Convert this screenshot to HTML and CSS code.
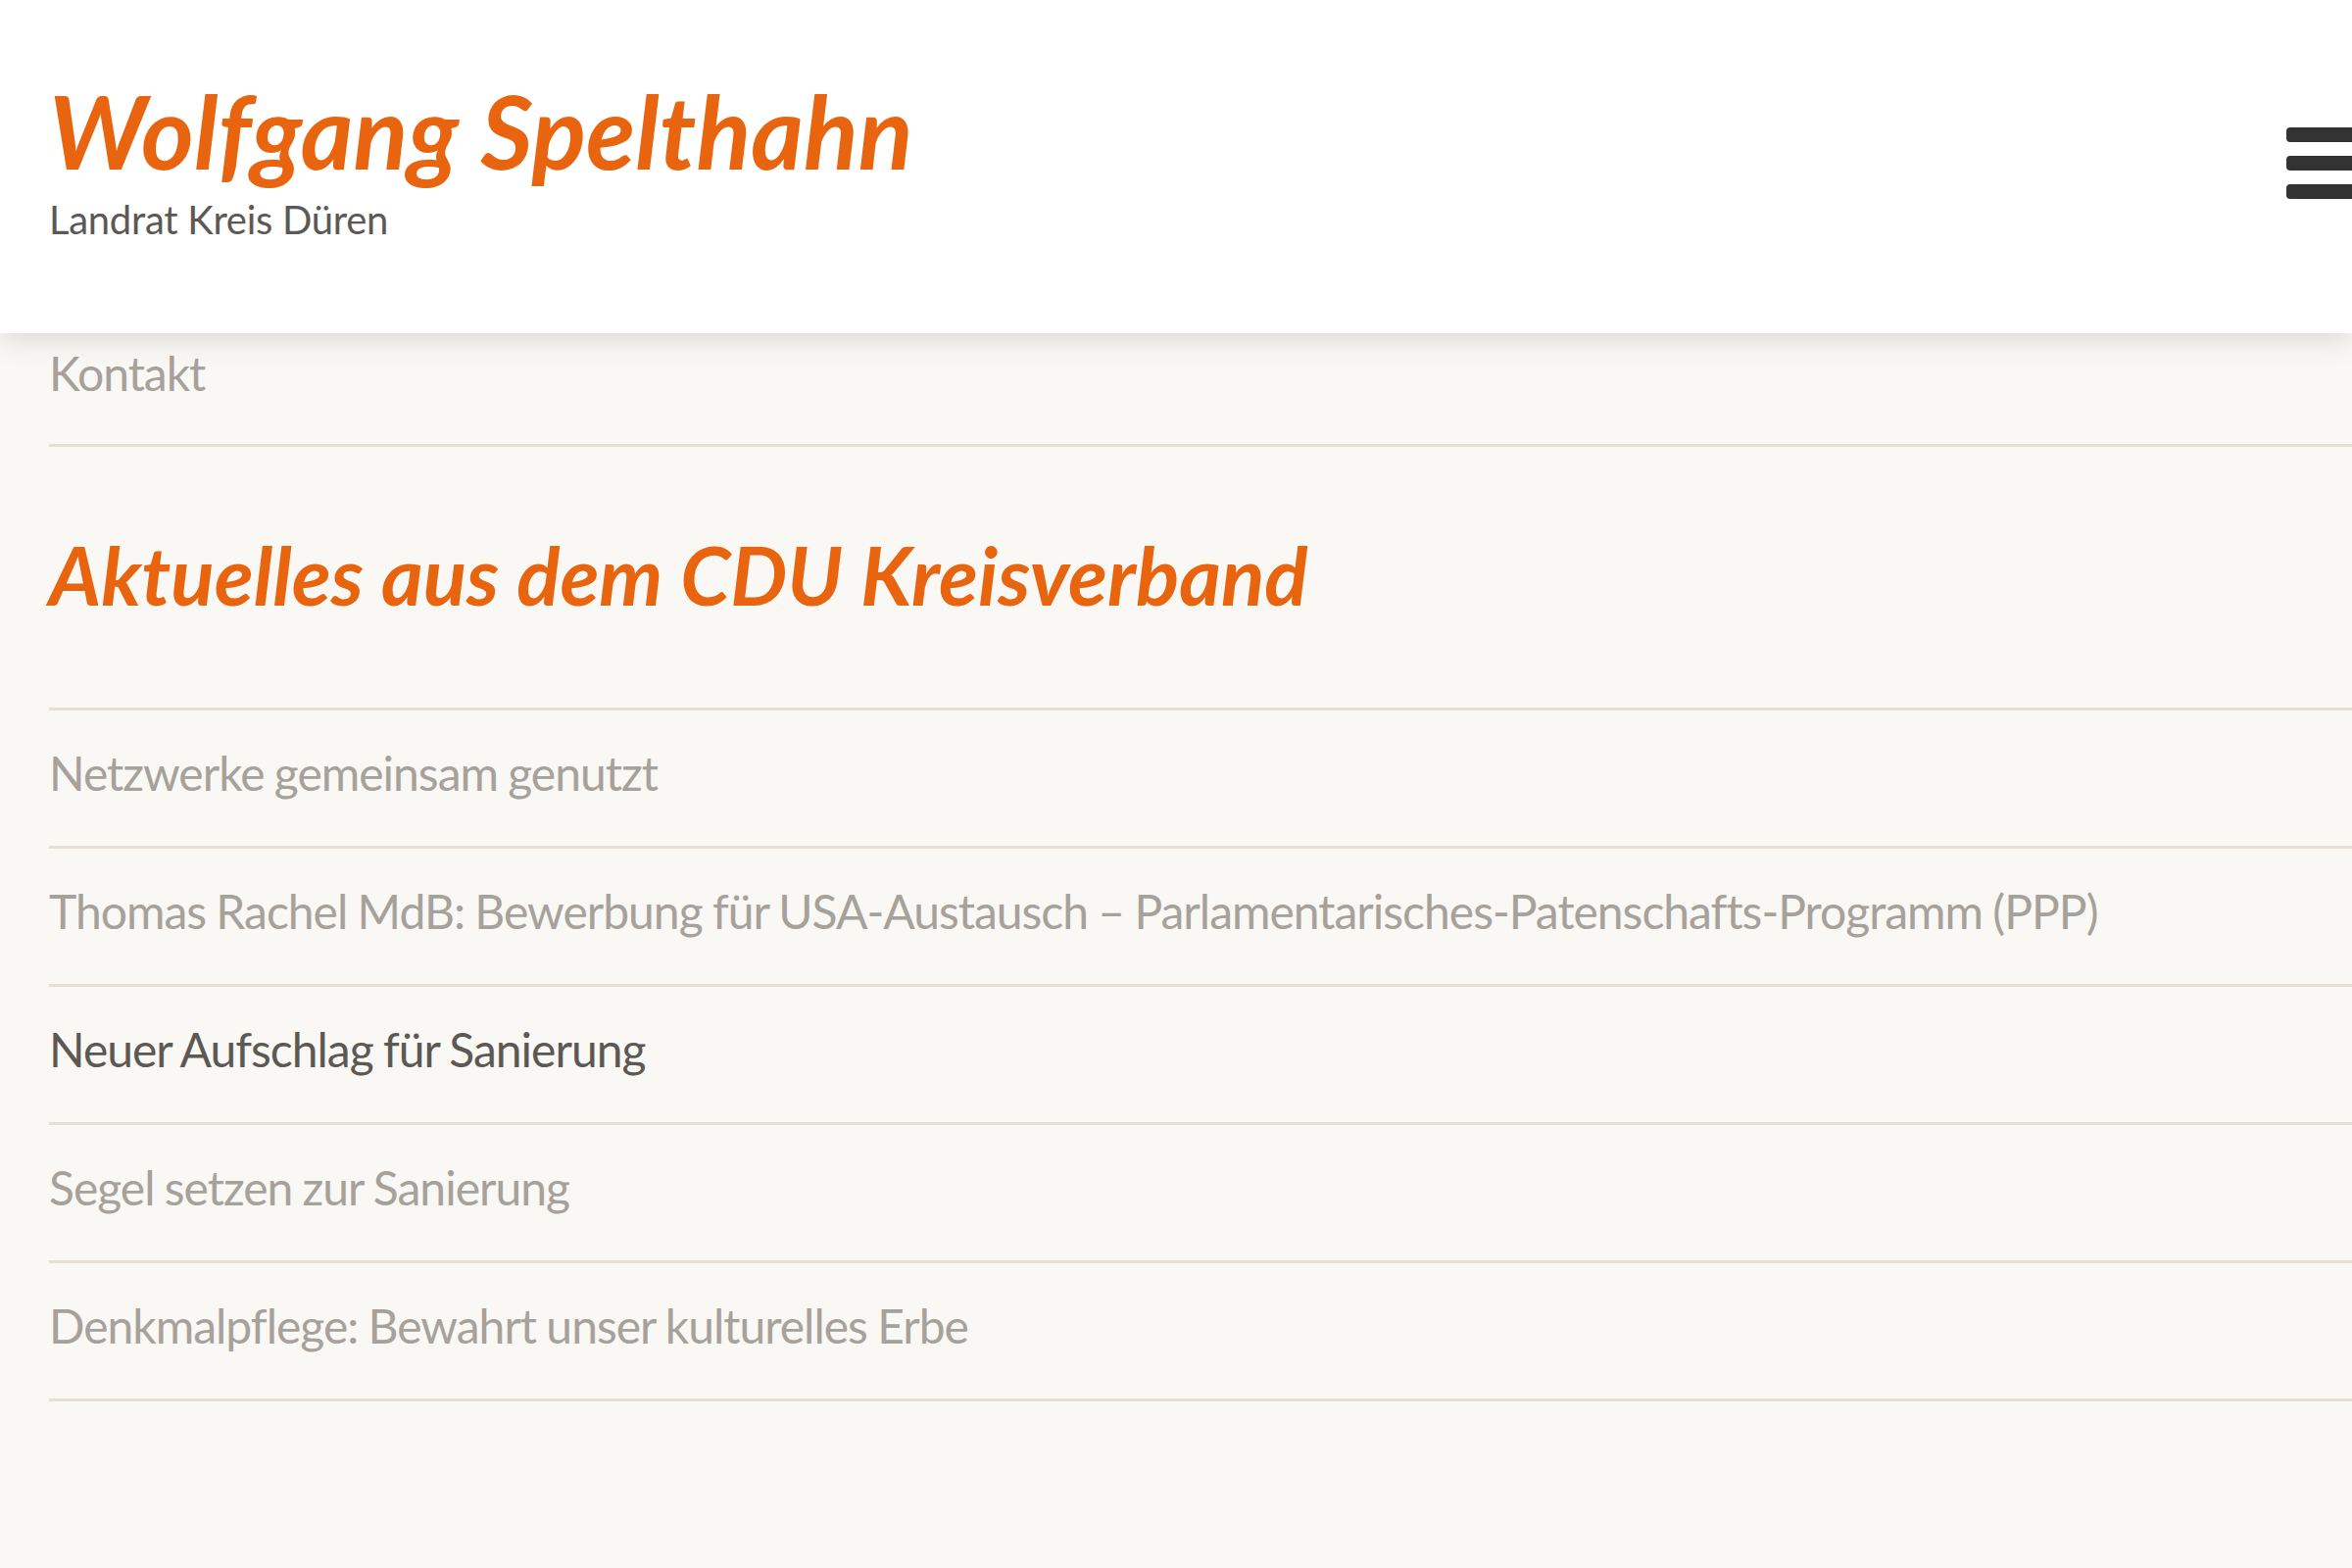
FILE: index.html
```html
<!DOCTYPE html>
<html lang="de">
<head>
<meta charset="utf-8">
<title>Wolfgang Spelthahn – Landrat Kreis Düren</title>
<link rel="stylesheet" href="styles.css">
</head>
<body>
<header class="site-header">
  <div class="brand">
    <div class="brand-name">Wolfgang Spelthahn</div>
    <div class="brand-sub">Landrat Kreis Düren</div>
  </div>
  <button class="menu-toggle" aria-label="Menü">
    <span class="bar"></span>
    <span class="bar"></span>
    <span class="bar"></span>
  </button>
</header>
<main class="content">
  <ul class="main-nav">
    <li class="nav-item"><a class="link" href="#">Kontakt</a></li>
  </ul>
  <section class="news">
    <h2 class="news-title">Aktuelles aus dem CDU Kreisverband</h2>
    <ul class="news-list">
      <li class="news-item"><a class="link" href="#">Netzwerke gemeinsam genutzt</a></li>
      <li class="news-item"><a class="link" href="#">Thomas Rachel MdB: Bewerbung für USA-Austausch – Parlamentarisches-Patenschafts-Programm (PPP)</a></li>
      <li class="news-item"><a class="link link-active" href="#">Neuer Aufschlag für Sanierung</a></li>
      <li class="news-item"><a class="link" href="#">Segel setzen zur Sanierung</a></li>
      <li class="news-item"><a class="link" href="#">Denkmalpflege: Bewahrt unser kulturelles Erbe</a></li>
    </ul>
  </section>
</main>
</body>
</html>
```

FILE: styles.css
```css
html, body {
  margin: 0;
  padding: 0;
  overflow: hidden;
}
body {
  background: #f9f8f5;
  font-family: Lato, "Open Sans", sans-serif;
  color: #a7a19b;
  width: 2400px;
  height: 1600px;
}
.site-header {
  position: relative;
  z-index: 2;
  height: 340px;
  box-sizing: border-box;
  background: #ffffff;
  display: flex;
  justify-content: space-between;
  align-items: flex-start;
  padding: 82px 0 0 50px;
  box-shadow: 0 6px 28px rgba(0, 0, 0, 0.13);
}
.brand-name {
  font-size: 103px;
  line-height: 103px;
  font-weight: 700;
  font-style: italic;
  color: #e8640f;
  letter-spacing: 0;
}
.brand-sub {
  margin-top: 19px;
  font-size: 40px;
  line-height: 40px;
  color: #5c5854;
  letter-spacing: -0.3px;
}
.menu-toggle {
  margin: 48px -23px 0 0;
  width: 90px;
  padding: 0;
  border: 0;
  background: transparent;
  display: flex;
  flex-direction: column;
  gap: 14px;
  flex-shrink: 0;
}
.bar {
  display: block;
  height: 15px;
  border-radius: 4px;
  background: #333333;
}
.content {
  padding-left: 50px;
}
.main-nav, .news-list {
  list-style: none;
  margin: 0;
  padding: 0;
}
.nav-item {
  border-bottom: 3px solid #e6dfd6;
}
.nav-item .link {
  padding: 12px 0 43px;
}
.link {
  display: block;
  font-size: 48px;
  line-height: 58px;
  color: #a7a19b;
  text-decoration: none;
  white-space: nowrap;
  letter-spacing: -1px;
  word-spacing: -1px;
}
.link-active {
  color: #5c5854;
}
.news-title {
  margin: 89px 0 95px;
  font-size: 82px;
  line-height: 82px;
  font-weight: 700;
  font-style: italic;
  color: #e8640f;
  letter-spacing: 0;
}
.news-list {
  border-top: 3px solid #e6dfd6;
}
.news-item {
  border-bottom: 3px solid #e6dfd6;
}
.news-item .link {
  padding: 35px 0 45px;
}
```
